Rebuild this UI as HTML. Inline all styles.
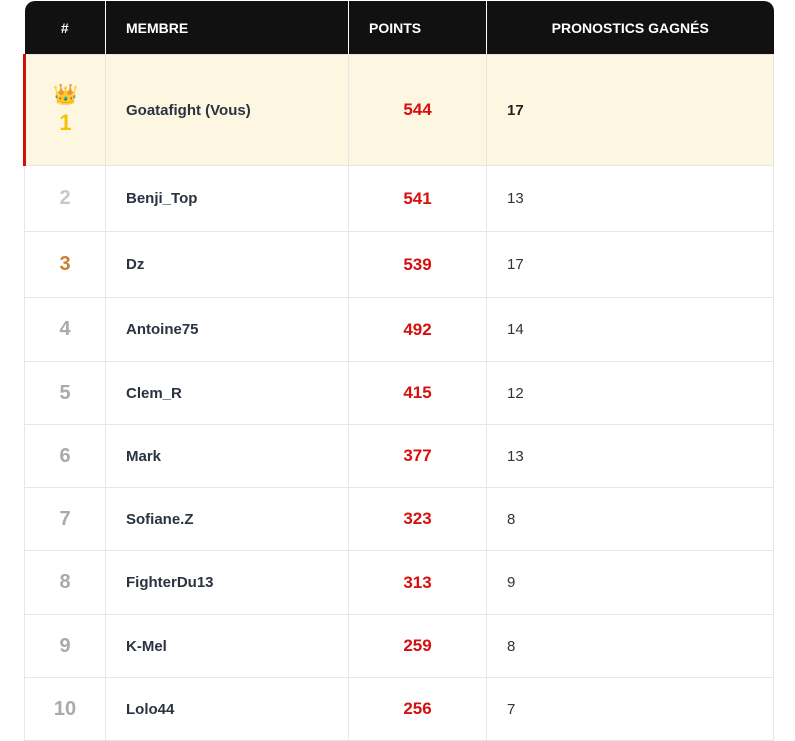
<!DOCTYPE html>
<html><head><meta charset="utf-8"><style>
body{margin:0;background:#fff;font-family:"Liberation Sans",sans-serif;width:795px;height:727px;overflow:hidden}
table{position:absolute;left:23px;top:1px;border-collapse:collapse;width:749px;table-layout:fixed}
th{background:#111;color:#fff;font-size:14px;font-weight:bold;height:53px;border-left:1px solid #fff;padding:0}
th:first-child{border-left:none;border-top-left-radius:10px}
th:last-child{border-top-right-radius:10px}
td{border:1px solid #e6e6e6;padding:0;font-size:15px;color:#2a3340}
td.r{text-align:center;font-weight:bold;font-size:20px;color:#aaa}
td.m{padding-left:20px;font-weight:bold}
td.p{text-align:center;color:#d60f0f;font-weight:bold;font-size:17px}
td.g{padding-left:20px;color:#333}
tr.me td{background:#fdf6e1}
tr.me td:first-child{border-left:3px solid #d20f0f}
</style></head><body>
<table>
<colgroup><col style="width:81px"><col style="width:243px"><col style="width:138px"><col style="width:287px"></colgroup>
<tr><th>#</th><th style="text-align:left;padding-left:20px">MEMBRE</th><th style="text-align:left;padding-left:20px">POINTS</th><th>PRONOSTICS GAGNÉS</th></tr>
<tr class="me" style="height:111px"><td class="r" style="color:#f5c400"><div style="font-size:20px;line-height:22px">👑</div><div style="font-size:22px;margin-top:4px">1</div></td><td class="m">Goatafight (Vous)</td><td class="p">544</td><td class="g" style="font-weight:bold;color:#222">17</td></tr>
<tr style="height:66px"><td class="r" style="color:#c8c8c8">2</td><td class="m">Benji_Top</td><td class="p">541</td><td class="g">13</td></tr>
<tr style="height:66px"><td class="r" style="color:#cd7f32">3</td><td class="m">Dz</td><td class="p">539</td><td class="g">17</td></tr>
<tr style="height:64px"><td class="r">4</td><td class="m">Antoine75</td><td class="p">492</td><td class="g">14</td></tr>
<tr style="height:63px"><td class="r">5</td><td class="m">Clem_R</td><td class="p">415</td><td class="g">12</td></tr>
<tr style="height:63px"><td class="r">6</td><td class="m">Mark</td><td class="p">377</td><td class="g">13</td></tr>
<tr style="height:63px"><td class="r">7</td><td class="m">Sofiane.Z</td><td class="p">323</td><td class="g">8</td></tr>
<tr style="height:64px"><td class="r">8</td><td class="m">FighterDu13</td><td class="p">313</td><td class="g">9</td></tr>
<tr style="height:63px"><td class="r">9</td><td class="m">K-Mel</td><td class="p">259</td><td class="g">8</td></tr>
<tr style="height:63px"><td class="r">10</td><td class="m">Lolo44</td><td class="p">256</td><td class="g">7</td></tr>
</table>
</body></html>
